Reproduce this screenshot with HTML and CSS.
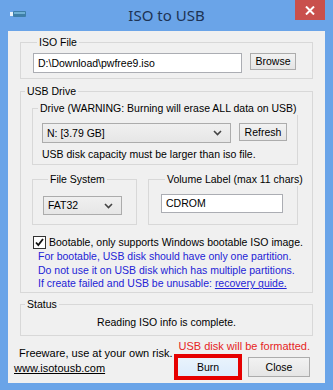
FILE: index.html
```html
<!DOCTYPE HTML>
<html>
<head>
<meta charset="utf-8">
<title>ISO to USB</title>
<link rel="stylesheet" href="styles.css">
</head>

<body>
	<div class="window">
		<div class="titlebar">
			<svg class="app-icon" width="16" height="6" viewBox="0 0 16 6">
				<rect x="0" y="1" width="3" height="4" fill="#e8f2fb"/>
				<rect x="3" y="0" width="13" height="6" rx="1" fill="#3f7fa8"/>
				<rect x="4" y="1" width="11" height="2" fill="#6fb0d4"/>
			</svg>
			<div class="title">ISO to USB</div>
			<div class="close-btn">
				<svg width="10" height="9" viewBox="0 0 10 9">
					<path d="M1 0.5 L9 8.5 M9 0.5 L1 8.5" stroke="#fff" stroke-width="2"/>
				</svg>
			</div>
		</div>
		<div class="client">
			<fieldset class="group group-iso">
				<legend>ISO File</legend>
				<div class="row iso-row">
					<div class="textbox path">D:\Download\pwfree9.iso</div>
					<div class="btn btn-browse">Browse</div>
				</div>
			</fieldset>

			<fieldset class="group group-usb">
				<legend>USB Drive</legend>
				<fieldset class="group group-drive">
					<legend>Drive (WARNING: Burning will erase ALL data on USB)</legend>
					<div class="drive-body">
						<div class="row">
							<div class="combo drive-combo">N: [3.79 GB]<svg class="chev" width="9" height="6" viewBox="0 0 9 6"><path d="M1 1 L4.5 4.5 L8 1" fill="none" stroke="#444" stroke-width="1.6"/></svg></div>
							<div class="btn btn-refresh">Refresh</div>
						</div>
						<div class="note">USB disk capacity must be larger than iso file.</div>
					</div>
				</fieldset>

				<div class="row pair">
					<fieldset class="group group-fs">
						<legend>File System</legend>
						<div class="combo fs-combo">FAT32<svg class="chev" width="9" height="6" viewBox="0 0 9 6"><path d="M1 1 L4.5 4.5 L8 1" fill="none" stroke="#444" stroke-width="1.6"/></svg></div>
					</fieldset>
					<fieldset class="group group-label">
						<legend>Volume Label (max 11 chars)</legend>
						<div class="textbox label-box">CDROM</div>
					</fieldset>
				</div>

				<div class="check-row">
					<span class="checkbox">
						<svg width="11" height="11" viewBox="0 0 11 11"><path d="M2 5.5 L4.3 8 L9 2" fill="none" stroke="#111" stroke-width="1.8"/></svg>
					</span>
					Bootable, only supports Windows bootable ISO image.
				</div>
				<div class="warn">
					<div>For bootable, USB disk should have only one partition.</div>
					<div>Do not use it on USB disk which has multiple partitions.</div>
					<div>If create failed and USB be unusable: <a href="javascript:;">recovery guide.</a></div>
				</div>
			</fieldset>

			<fieldset class="group group-status">
				<legend>Status</legend>
				<div class="status-text">Reading ISO info is complete.</div>
			</fieldset>

			<div class="footer">
				<div class="footer-left">
					<div class="freeware">Freeware, use at your own risk.</div>
					<a class="site" href="javascript:;">www.isotousb.com</a>
				</div>
				<div class="footer-right">
					<div class="format-warn">USB disk will be formatted.</div>
					<div class="row btns">
						<div class="btn btn-burn">Burn</div>
						<div class="btn btn-close">Close</div>
					</div>
				</div>
			</div>
		</div>
	</div>
</body>
</html>
```

FILE: styles.css
```css
*{padding:0;margin:0;box-sizing:border-box;}
body{background:#6aa4e8;}
.window{width:333px;height:390px;background:#6aa4e8;padding:0 8px 7px;display:flex;flex-direction:column;}
.titlebar{height:31px;display:grid;grid-template-columns:1fr auto 1fr;align-items:start;}
.app-icon{margin:11px 0 0 2px;}
.title{font:15px/30px "Noto Sans",sans-serif;color:#1d3354;}
.close-btn{justify-self:end;width:30px;height:20px;background:#c9504d;display:flex;align-items:center;justify-content:center;}

.client{flex:1;background:#f0f0f0;display:flex;flex-direction:column;overflow:hidden;white-space:nowrap;font:10.5px/13px "Liberation Sans",Arial,sans-serif;color:#000;}
.row{display:flex;align-items:flex-start;}

.group{border:1px solid #d8d8d8;padding:0;min-width:0;}
.group legend{margin-left:4px;padding:0 2px;line-height:13px;}

.textbox{background:#fff;border:1px solid #abadb3;height:20px;padding:0 4px;line-height:18px;}
.btn{border:1px solid #acacac;background:linear-gradient(#f2f2f2,#e5e5e5);text-align:center;}
.combo{border:1px solid #acacac;background:linear-gradient(#f0f0f0,#e6e6e6);display:flex;align-items:center;justify-content:space-between;padding:0 8px 0 4px;}

.group-iso{margin:5px 12px 0 12px;padding:4px 0 5px 12px;}
.path{width:209px;}
.btn-browse{width:46px;height:17px;line-height:15px;margin-left:8px;}

.group-usb{margin:6px 12px 0 12px;padding:0 0 1px;}
.group-drive{margin:4px 14px 0 11px;}
.group-drive legend{margin-left:5px;}
.drive-body{padding:8px 0 3px 9px;}
.drive-combo{width:189px;height:20px;}
.btn-refresh{width:48px;height:18px;line-height:16px;margin-left:8px;}
.note{margin-top:5px;}

.pair{margin:8px 0 0 11px;align-items:stretch;}
.group-fs{width:105px;padding:10px 0 9px 10px;}
.group-fs legend{margin-left:5px;}
.fs-combo{width:79px;height:19px;}
.group-label{width:150px;margin-left:11px;padding:8px 0 10px 12px;}
.label-box{width:122px;height:19px;line-height:17px;}

.check-row{display:flex;align-items:center;margin:11px 0 0 12px;height:13px;}
.checkbox{width:13px;height:13px;border:1px solid #333;background:#fff;margin-right:3px;display:flex;align-items:center;justify-content:center;}
.warn{color:#2323d6;margin:1px 0 0 17px;line-height:13.7px;}
.warn a{color:#2323d6;}

.group-status{margin:5px 12px 0 12px;padding:5px 0 6px;}
.status-text{text-align:center;}

.footer{display:flex;justify-content:space-between;margin-top:4px;padding-right:15px;}
.footer-left{margin-top:6px;font-size:11px;line-height:15px;}
.freeware{margin-left:11px;}
.site{display:block;margin-left:6px;color:#000;}
.footer-right{display:flex;flex-direction:column;align-items:flex-end;}
.format-warn{color:#e62424;font-size:11px;line-height:13px;}
.btns{margin-top:4px;}
.btn-burn{width:62px;height:20px;line-height:18px;background:linear-gradient(#e9f3fc,#dcecfc);outline:4px solid #e60000;outline-offset:-1px;margin-right:9px;}
.btn-close{width:62px;height:20px;line-height:18px;}
```
